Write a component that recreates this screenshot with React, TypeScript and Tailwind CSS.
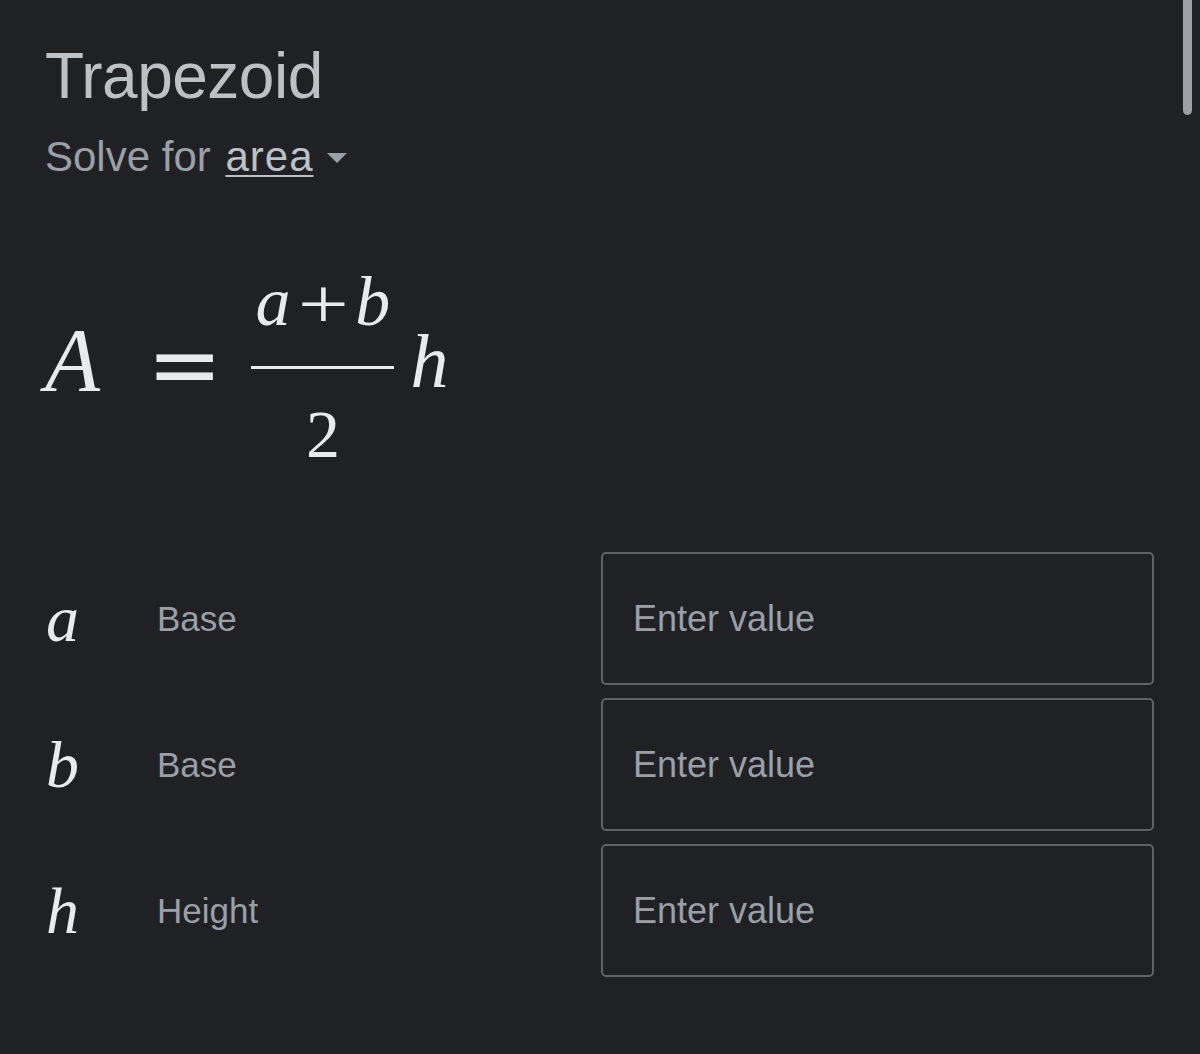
import React from "react";

const serif = "font-['Liberation_Serif','Times_New_Roman',serif]";

function Row({ v, label }: { v: string; label: string }) {
  return (
    <div className="flex h-[133px] items-center">
      <span className={`${serif} w-[112px] pl-[1px] text-[66px] leading-none italic text-[#e8eaed]`}>{v}</span>
      <span className="text-[35px] leading-none text-[#9aa0a6]">{label}</span>
      <input
        type="text"
        placeholder="Enter value"
        className="ml-auto h-full w-[553px] rounded-[5px] border-2 border-[#5f6368] bg-transparent pl-[30px] text-[36px] text-[#e8eaed] outline-none placeholder:text-[#9aa0a6]"
      />
    </div>
  );
}

export default function App() {
  return (
    <div className="relative min-h-[1054px] w-[1200px] overflow-hidden bg-[#202124] font-['Liberation_Sans',Arial,sans-serif]">
      <div className="absolute right-[8px] top-0 h-[115px] w-[9px] rounded-b-full bg-[#9aa0a6]" />
      <div className="pl-[45px] pr-[46px] pt-[44px]">
        <h1 className="text-[64px] font-normal leading-[64px] tracking-[-0.5px] text-[#bdc1c6]">Trapezoid</h1>
        <div className="mt-[28px] flex items-center text-[42px] leading-[42px] text-[#9aa0a6]">
          <span>Solve for&nbsp;</span>
          <span className="ml-[3px] tracking-[1px] text-[#bdc1c6] underline decoration-2 underline-offset-[4px]">area</span>
          <svg className="ml-[14px] mt-[2px]" width="20" height="11" viewBox="0 0 20 11">
            <path d="M0 0 L20 0 L10 10 Z" fill="#9aa0a6" />
          </svg>
        </div>

        <div className={`${serif} mt-[92px] flex items-start text-[#e8eaed]`}>
          <span className="mt-[46px] text-[90px] leading-[90px] italic">A</span>
          <span className="ml-[47px] mt-[50px] font-['DejaVu_Sans'] text-[90px] leading-none">=</span>
          <div className="ml-[29px] flex w-[143px] flex-col items-center">
            <div className="-mt-[2px] flex items-baseline text-[66px] leading-[66px]">
              <span className="text-[70px] italic">a</span>
              <span className="mx-[12px] inline-block translate-y-[3px] scale-x-[1.25] text-[72px]">+</span>
              <span className="text-[70px] italic">b</span>
            </div>
            <div className="mt-[31px] h-[3px] w-full bg-[#e8eaed]" />
            <span className="mt-[31px] text-[68px] leading-[68px]">2</span>
          </div>
          <span className="ml-[16px] mt-[53px] text-[76px] leading-[76px] italic">h</span>
        </div>

        <div className="mt-[84px] flex flex-col gap-[13px]">
          <Row v="a" label="Base" />
          <Row v="b" label="Base" />
          <Row v="h" label="Height" />
        </div>
      </div>
    </div>
  );
}
